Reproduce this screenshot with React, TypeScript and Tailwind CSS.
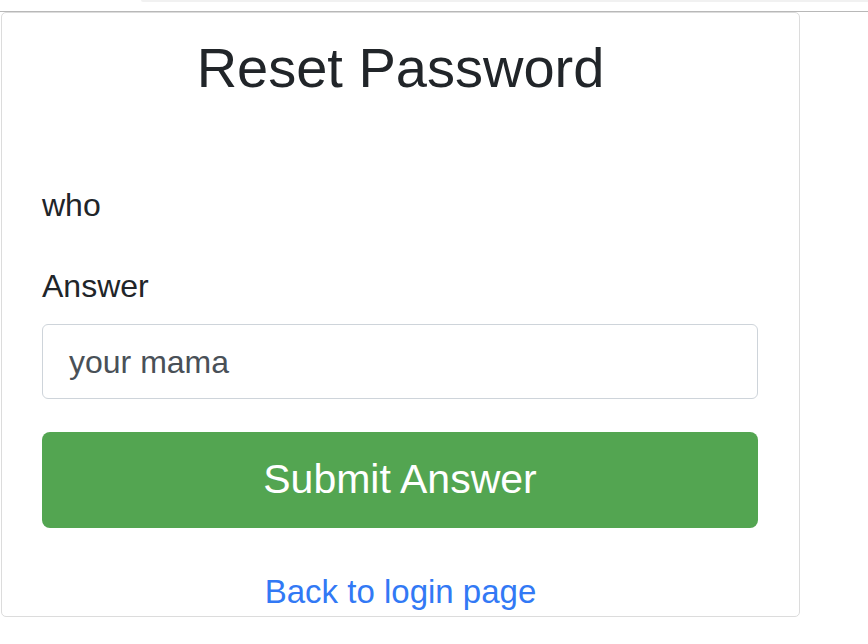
export default function App() {
  return (
    <div className="min-h-[644px] w-[868px] bg-white font-['Liberation_Sans',Arial,sans-serif] text-[#212529]">
      {/* Browser chrome remnant */}
      <div className="flex h-[11px] items-start">
        <div className="w-[141px]" />
        <div className="h-[2px] flex-1 rounded-bl-[4px] bg-[#f1f1f1]" />
      </div>
      <div className="h-[1px] w-full bg-[#b8b8b8]" />

      {/* Card */}
      <div className="ml-[1px] w-[799px] rounded-[5px] border border-[#dcdcdc] px-[40px] pt-[22px]">
        <h1 className="text-center text-[56px] leading-[66px] font-normal">
          Reset Password
        </h1>

        <p className="mt-[80px] text-[32px] leading-[48px]">who</p>

        <label className="mt-[33px] block text-[32px] leading-[48px]">
          Answer
        </label>

        <div className="mt-[14px] flex h-[75px] w-[716px] items-center rounded-[6px] border border-[#ced4da] px-[26px] text-[32px] text-[#495057]">
          your mama
        </div>

        <button className="mt-[33px] flex h-[96px] w-[716px] items-center justify-center rounded-[8px] bg-[#53a551] text-[41px] text-white">
          Submit Answer
        </button>

        <div className="mt-[40px] text-center text-[33px] leading-[48px] text-[#3279f5]">
          Back to login page
        </div>
      </div>
    </div>
  );
}
